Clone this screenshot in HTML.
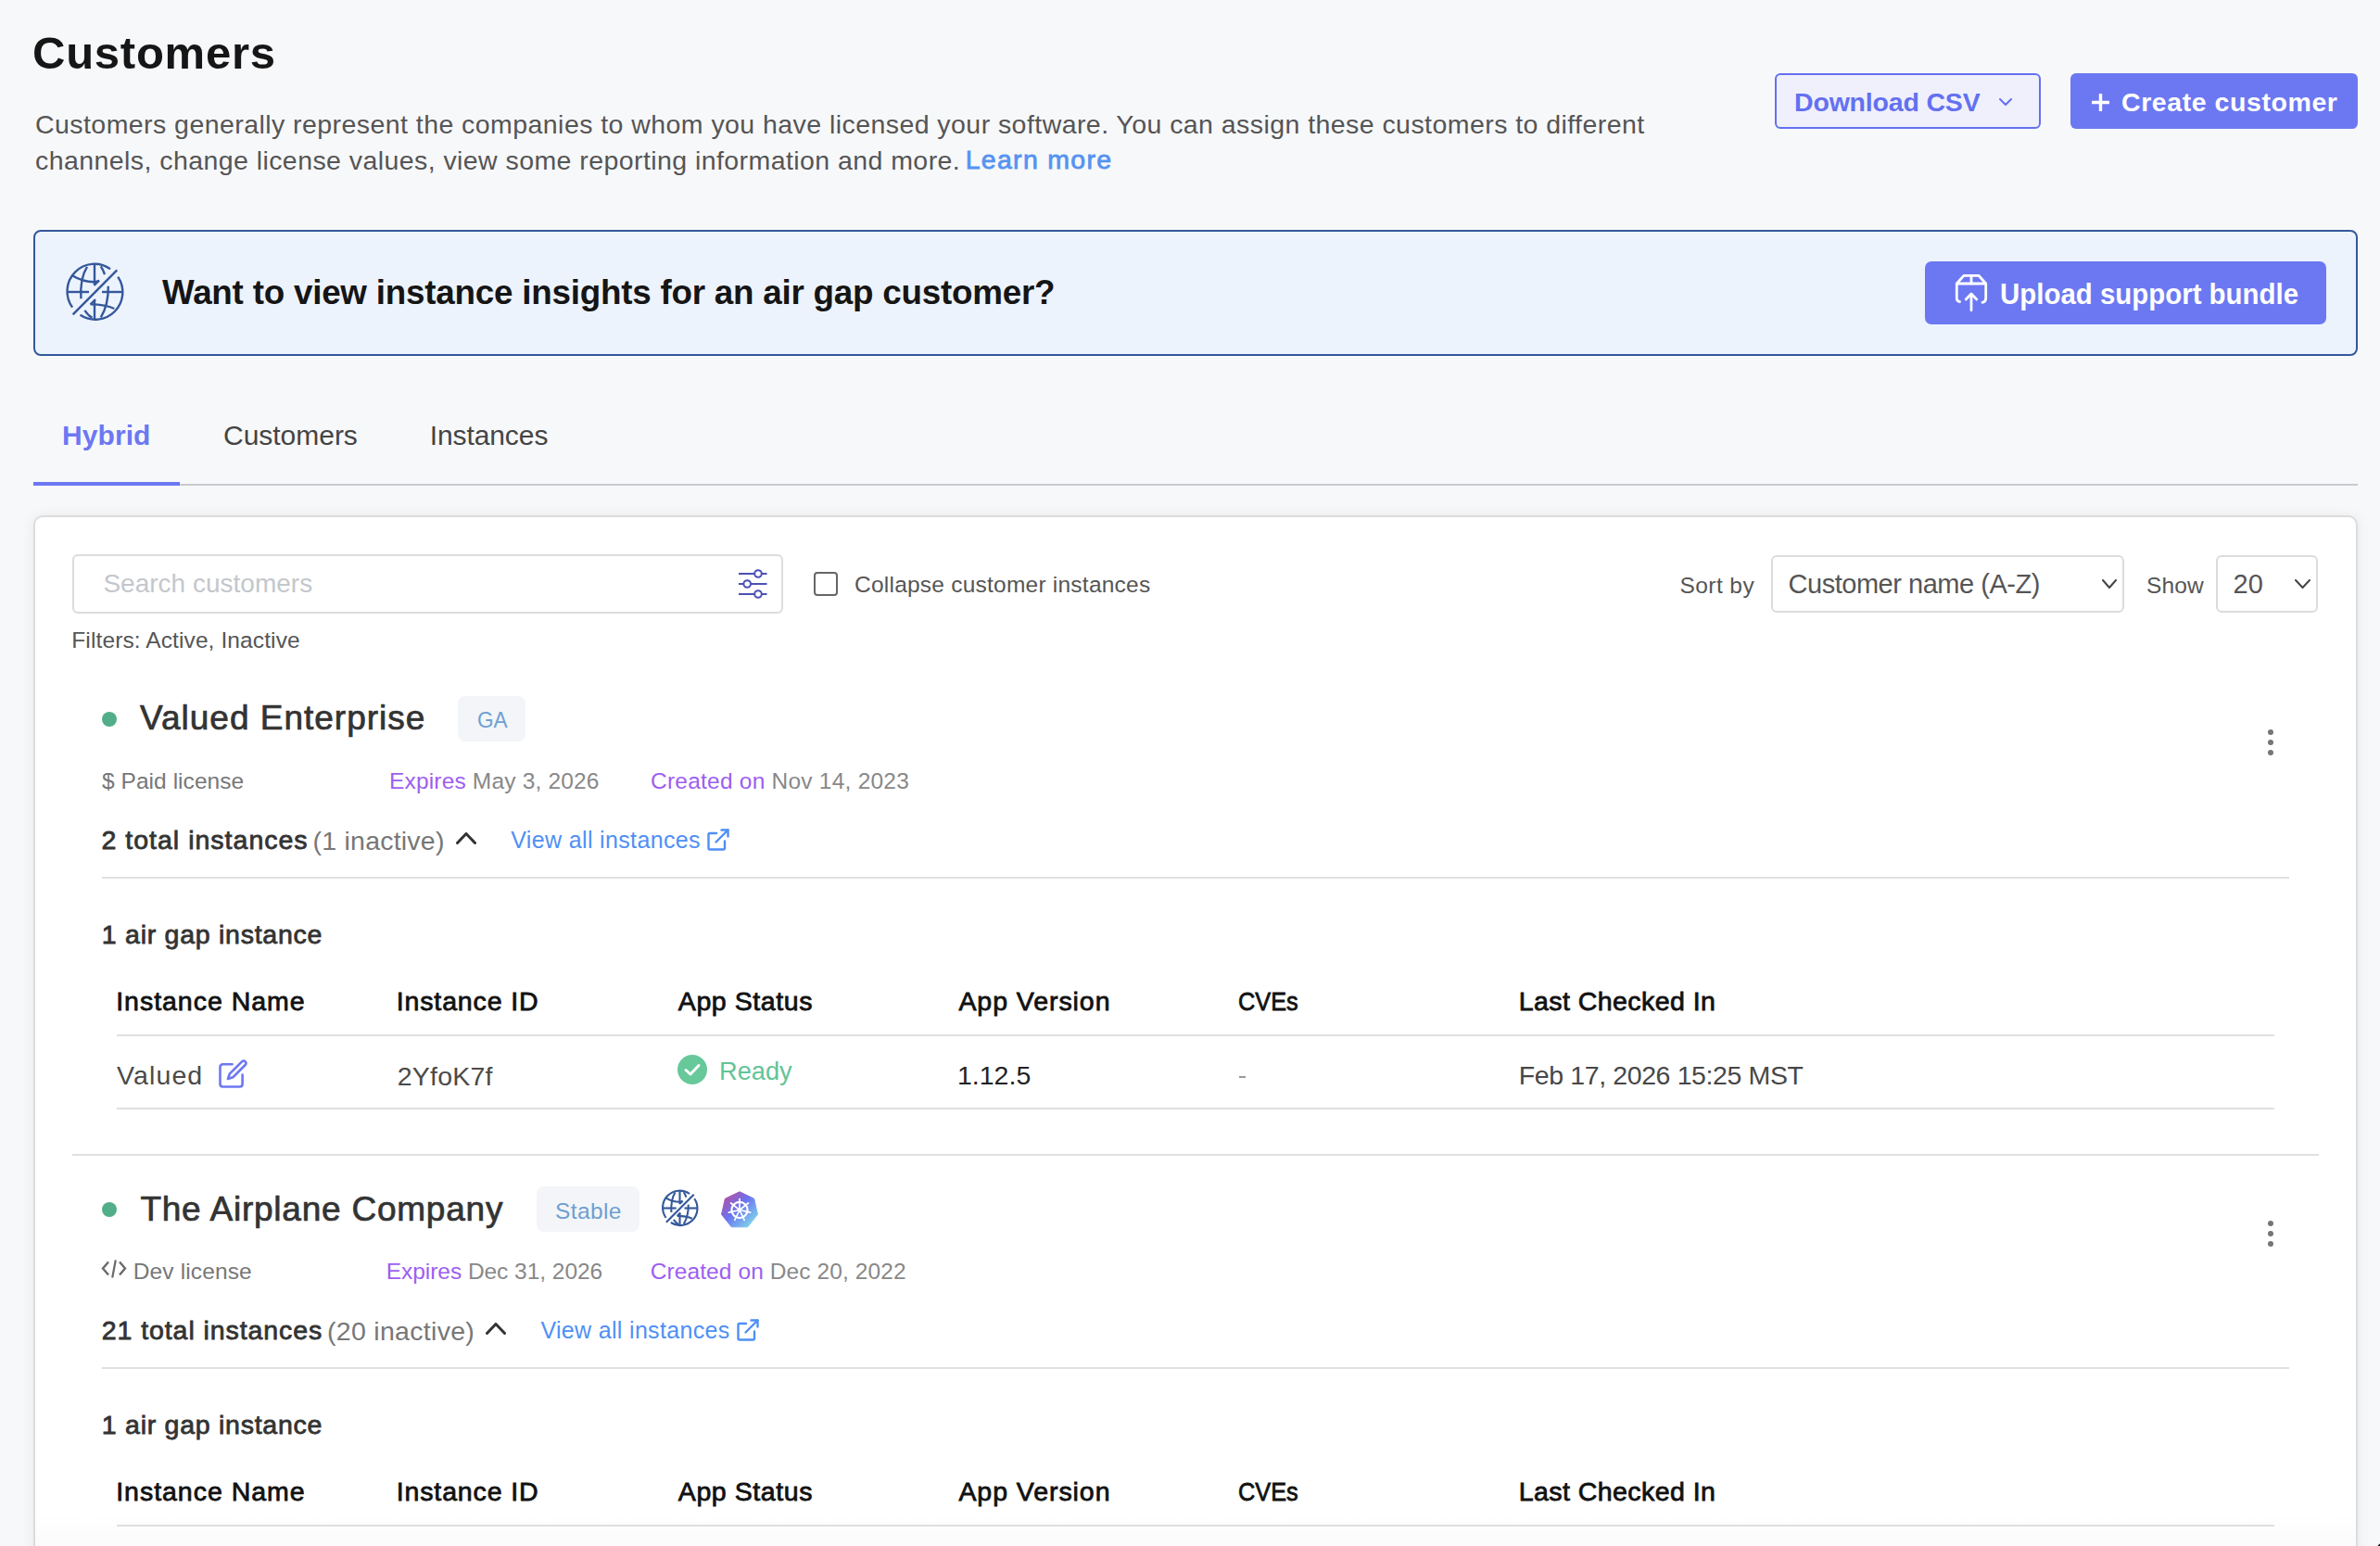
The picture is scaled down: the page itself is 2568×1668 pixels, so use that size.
<!DOCTYPE html><html><head><meta charset="utf-8"><style>html,body{margin:0;padding:0}body{width:2568px;height:1668px;overflow:hidden;position:relative;background:#f7f8fa;font-family:"Liberation Sans",sans-serif}.t{position:absolute;white-space:nowrap;line-height:1}.b{position:absolute;box-sizing:border-box}.p{color:#9d5ef0}@media (max-width:1400px){html{zoom:0.5}}</style></head><body>
<div class="t" style="left:35.0px;top:33.0px;font-size:49px;font-weight:700;letter-spacing:0.75px;color:#161616">Customers</div>
<div class="t" style="left:38.0px;top:120.0px;font-size:28.5px;letter-spacing:0.44px;color:#555">Customers generally represent the companies to whom you have licensed your software. You can assign these customers to different</div>
<div class="t" style="left:38.0px;top:159.0px;font-size:28.5px;letter-spacing:0.43px;color:#555">channels, change license values, view some reporting information and more.</div>
<div class="t" style="left:1041.7px;top:158.0px;font-size:28.5px;-webkit-text-stroke:0.8px currentColor;letter-spacing:1.29px;color:#5593f0">Learn more</div>
<div class="b" style="left:1915px;top:79px;width:287px;height:60px;border:2px solid #6470f0;background:#eff0fc;border-radius:6px"></div>
<div class="t" style="left:1936.0px;top:96.0px;font-size:28.5px;font-weight:700;letter-spacing:-0.18px;color:#6470f0">Download CSV</div>
<svg class="b" style="left:2157px;top:106px;" width="14" height="8" viewBox="0 0 14 8"><path d="M1.0 1.0 L7.0 7.0 L13.0 1.0" fill="none" stroke="#6470f0" stroke-width="2" stroke-linecap="round" stroke-linejoin="round"/></svg>
<div class="b" style="left:2234px;top:79px;width:310px;height:60px;background:#6c78f2;border-radius:6px"></div>
<svg class="b" style="left:2257px;top:101px;" width="19" height="19" viewBox="0 0 19 19"><path d="M9.5 1 V18 M1 9.5 H18" stroke="#fff" stroke-width="3.4" stroke-linecap="round"/></svg>
<div class="t" style="left:2289.0px;top:96.0px;font-size:28.5px;font-weight:700;letter-spacing:0.57px;color:#fff">Create customer</div>
<div class="b" style="left:36px;top:248px;width:2508px;height:136px;border:2px solid #34589b;background:#edf3fd;border-radius:8px"></div>
<svg class="b" style="left:66px;top:279px;" width="72" height="72" viewBox="0 0 72 72"><g fill="none" stroke="#34589b" stroke-width="2.4" stroke-linecap="butt"><path d="M53 11.2 A29.5 29.5 0 0 0 12.1 52.6"/><path d="M61.2 19.6 A29.5 29.5 0 0 1 20.5 60.8"/><path d="M12.6 60.3 L60.3 12.3"/><path d="M36 6.5 V28.5"/><path d="M12.5 18.5 C18 22 26 25 36 25.3 L41 24"/><path d="M35.5 28.8 L41 23.5"/><path d="M28 8.8 C22 18 20.5 28 21.4 43.3"/><path d="M6 36 H30"/><path d="M44 36 H66"/><path d="M50.8 29.8 C51 45 48 55 42.8 63.3"/><path d="M36 44.5 V66"/><path d="M31.7 49.4 C42 49.5 51 51 57.3 54"/><path d="M31.5 49.5 L37 44"/><path d="M42.8 8.4 C44.5 11 46 14 47 17.2"/><path d="M25.4 55.9 C27.5 59 30 62 33.5 63.8"/></g></svg>
<div class="t" style="left:175.0px;top:298.0px;font-size:36.8px;font-weight:700;letter-spacing:-0.23px;color:#151515">Want to view instance insights for an air gap customer?</div>
<div class="b" style="left:2077px;top:282px;width:433px;height:68px;background:#6c78f2;border-radius:7px"></div>
<svg class="b" style="left:2100px;top:290px;" width="54" height="54" viewBox="0 0 54 54"><g fill="none" stroke="#fff" stroke-width="2.8" stroke-linecap="round" stroke-linejoin="round"><path d="M14.5 35.5 Q11.3 35 11.3 32 V16 L18.9 7.3 H35 L42.7 16 V32 Q42.7 35.5 39 36.3"/><path d="M11.3 16 H42.7"/><path d="M27 7.3 V16"/><path d="M27 44.8 V27.5"/><path d="M21.2 33 L27 27 L32.8 33"/></g></svg>
<div class="t" style="left:2158.1px;top:302.0px;font-size:31px;font-weight:700;letter-spacing:0.00px;color:#fff;transform:scaleX(0.9494);transform-origin:0 0">Upload support bundle</div>
<div class="t" style="left:67.0px;top:454.7px;font-size:30px;font-weight:700;letter-spacing:0.08px;color:#6c78f2">Hybrid</div>
<div class="t" style="left:241.0px;top:454.7px;font-size:30px;letter-spacing:-0.02px;color:#444">Customers</div>
<div class="t" style="left:463.7px;top:454.7px;font-size:30px;letter-spacing:-0.09px;color:#444">Instances</div>
<div class="b" style="left:36px;top:522px;width:2508px;height:2px;background:#c9cbcf"></div>
<div class="b" style="left:36px;top:520px;width:158px;height:4px;background:#6c78f2"></div>
<div class="b" style="left:36px;top:556px;width:2508px;height:1300px;border:2px solid #dcdcdc;background:#fff;border-radius:10px;box-shadow:0 1px 14px rgba(0,0,0,0.075)"></div>
<div class="b" style="left:78px;top:598px;width:767px;height:64px;border:2px solid #dcdcdc;border-radius:6px;background:#fff"></div>
<div class="t" style="left:111.4px;top:616.0px;font-size:28px;letter-spacing:0.01px;color:#c3c7cc">Search customers</div>
<svg class="b" style="left:795px;top:613px;" width="34" height="34" viewBox="0 0 34 34"><g fill="none" stroke="#4b50b6" stroke-width="2"><path d="M2 6 H32.5"/><path d="M2 17 H32.5"/><path d="M2 28 H32.5"/></g><g fill="#fff" stroke="#4b50b6" stroke-width="2"><circle cx="23" cy="6" r="3.8"/><circle cx="11.2" cy="17" r="3.8"/><circle cx="23" cy="28" r="3.8"/></g></svg>
<div class="b" style="left:878px;top:617px;width:26px;height:26px;border:2px solid #666;border-radius:4px;background:#fff"></div>
<div class="t" style="left:922.0px;top:619.0px;font-size:24.5px;letter-spacing:0.23px;color:#555">Collapse customer instances</div>
<div class="t" style="left:77.3px;top:679.3px;font-size:24.5px;letter-spacing:0.11px;color:#555">Filters: Active, Inactive</div>
<div class="t" style="left:1812.5px;top:619.8px;font-size:24.5px;letter-spacing:0.42px;color:#555">Sort by</div>
<div class="b" style="left:1911px;top:599px;width:381px;height:62px;border:2px solid #dcdcdc;border-radius:6px;background:#fff"></div>
<div class="t" style="left:1929.5px;top:616.0px;font-size:29px;letter-spacing:-0.47px;color:#555">Customer name (A-Z)</div>
<svg class="b" style="left:2268px;top:625px;" width="16" height="10" viewBox="0 0 16 10"><path d="M1.0 1.0 L8.0 9.0 L15.0 1.0" fill="none" stroke="#444" stroke-width="2" stroke-linecap="round" stroke-linejoin="round"/></svg>
<div class="t" style="left:2316.0px;top:619.8px;font-size:24.5px;letter-spacing:0.17px;color:#555">Show</div>
<div class="b" style="left:2391px;top:599px;width:110px;height:62px;border:2px solid #dcdcdc;border-radius:6px;background:#fff"></div>
<div class="t" style="left:2409.5px;top:616.0px;font-size:29px;letter-spacing:0.00px;color:#555">20</div>
<svg class="b" style="left:2476px;top:625px;" width="17" height="10" viewBox="0 0 17 10"><path d="M1.0 1.0 L8.5 9.0 L16.0 1.0" fill="none" stroke="#444" stroke-width="2" stroke-linecap="round" stroke-linejoin="round"/></svg>
<div class="b" style="left:110px;top:768px;width:16px;height:16px;border-radius:50%;background:#52ae88"></div>
<div class="b" style="left:2447px;top:787px;width:6px;height:6px;border-radius:50%;background:#757575"></div>
<div class="b" style="left:2447px;top:798px;width:6px;height:6px;border-radius:50%;background:#757575"></div>
<div class="b" style="left:2447px;top:809px;width:6px;height:6px;border-radius:50%;background:#757575"></div>
<div class="b" style="left:110px;top:1297px;width:16px;height:16px;border-radius:50%;background:#52ae88"></div>
<div class="b" style="left:2447px;top:1317px;width:6px;height:6px;border-radius:50%;background:#757575"></div>
<div class="b" style="left:2447px;top:1328px;width:6px;height:6px;border-radius:50%;background:#757575"></div>
<div class="b" style="left:2447px;top:1339px;width:6px;height:6px;border-radius:50%;background:#757575"></div>
<div class="t" style="left:151.0px;top:755.8px;font-size:37px;-webkit-text-stroke:0.74px currentColor;letter-spacing:1.00px;color:#333">Valued Enterprise</div>
<div class="b" style="left:494px;top:751px;width:73px;height:49px;background:#f3f5f8;border-radius:8px"></div>
<div class="t" style="left:514.7px;top:765.0px;font-size:24.5px;letter-spacing:0.00px;color:#6f9fd2;transform:scaleX(0.9235);transform-origin:0 0">GA</div>
<div class="t" style="left:110.0px;top:831.0px;font-size:24.5px;letter-spacing:0.05px;color:#777">$ Paid license</div>
<div class="t" style="left:420.0px;top:831.0px;font-size:24.5px;letter-spacing:0.17px;color:#888"><span class=p>Expires</span> May 3, 2026</div>
<div class="t" style="left:702.0px;top:831.0px;font-size:24.5px;letter-spacing:0.23px;color:#888"><span class=p>Created on</span> Nov 14, 2023</div>
<div class="t" style="left:109.5px;top:892.0px;font-size:28.5px;-webkit-text-stroke:0.8px currentColor;letter-spacing:1.01px;color:#333">2 total instances</div>
<div class="t" style="left:337.6px;top:893.0px;font-size:28.5px;letter-spacing:0.22px;color:#777">(1 inactive)</div>
<svg class="b" style="left:492px;top:898px;" width="22" height="13" viewBox="0 0 22 13"><path d="M1.5 11.5 L11.0 1.5 L20.5 11.5" fill="none" stroke="#333" stroke-width="3" stroke-linecap="round" stroke-linejoin="round"/></svg>
<div class="t" style="left:551.3px;top:894.0px;font-size:25px;letter-spacing:0.35px;color:#4f8ff5">View all instances</div>
<svg class="b" style="left:763px;top:894px;" width="24" height="24" viewBox="0 0 24 24"><g fill="none" stroke="#4f8ff5" stroke-width="2.4" stroke-linecap="round" stroke-linejoin="round"><path d="M10 5 H3 Q1.5 5 1.5 6.5 V21 Q1.5 22.5 3 22.5 H17.5 Q19 22.5 19 21 V13.5"/><path d="M9.5 14.5 L22.5 1.5"/><path d="M15.5 1.5 H22.5 V8.5"/></g></svg>
<div class="b" style="left:110px;top:946px;width:2360px;height:2px;background:#e0e0e0"></div>
<div class="t" style="left:109.8px;top:993.7px;font-size:28.5px;-webkit-text-stroke:0.8px currentColor;letter-spacing:0.74px;color:#333">1 air gap instance</div>
<div class="t" style="left:125.2px;top:1066.0px;font-size:28.5px;-webkit-text-stroke:0.8px currentColor;letter-spacing:0.98px;color:#111">Instance Name</div>
<div class="t" style="left:427.7px;top:1066.0px;font-size:28.5px;-webkit-text-stroke:0.8px currentColor;letter-spacing:0.88px;color:#111">Instance ID</div>
<div class="t" style="left:731.8px;top:1066.0px;font-size:28.5px;-webkit-text-stroke:0.8px currentColor;letter-spacing:0.58px;color:#111">App Status</div>
<div class="t" style="left:1034.4px;top:1066.0px;font-size:28.5px;-webkit-text-stroke:0.8px currentColor;letter-spacing:0.94px;color:#111">App Version</div>
<div class="t" style="left:1336.1px;top:1066.0px;font-size:28.5px;-webkit-text-stroke:0.8px currentColor;letter-spacing:0.00px;color:#111;transform:scaleX(0.8873);transform-origin:0 0">CVEs</div>
<div class="t" style="left:1638.7px;top:1066.0px;font-size:28.5px;-webkit-text-stroke:0.8px currentColor;letter-spacing:0.45px;color:#111">Last Checked In</div>
<div class="b" style="left:126px;top:1116px;width:2328px;height:2px;background:#e0e0e0"></div>
<div class="t" style="left:126.1px;top:1145.8px;font-size:28.5px;letter-spacing:1.10px;color:#4a4a4a">Valued</div>
<svg class="b" style="left:234px;top:1142px;" width="34" height="34" viewBox="0 0 34 34"><g fill="none" stroke="#6c78f2" stroke-width="2.6" stroke-linecap="round" stroke-linejoin="round"><path d="M16.6 6.3 H6.5 Q3.5 6.3 3.5 9.3 V27.5 Q3.5 30.5 6.5 30.5 H24.6 Q27.6 30.5 27.6 27.5 V17.5"/><path d="M27 3.4 L13.7 16.7 L12 22 L17.3 20.3 L30.6 7 Q32.5 5 30.6 3.4 Q29 1.5 27 3.4 Z"/></g></svg>
<div class="t" style="left:428.7px;top:1146.5px;font-size:28.5px;letter-spacing:0.22px;color:#4a4a4a">2YfoK7f</div>
<svg class="b" style="left:731px;top:1138px;" width="32" height="32" viewBox="0 0 32 32"><circle cx="16" cy="16" r="16" fill="#67c89a"/><path d="M9 16.5 L14 21 L23 11.5" fill="none" stroke="#fff" stroke-width="3" stroke-linecap="round" stroke-linejoin="round"/></svg>
<div class="t" style="left:776.1px;top:1140.9px;font-size:28.5px;letter-spacing:0.00px;color:#62c496;transform:scaleX(0.9550);transform-origin:0 0">Ready</div>
<div class="t" style="left:1033.0px;top:1146.0px;font-size:28.5px;letter-spacing:0.00px;color:#222">1.12.5</div>
<div class="b" style="left:1337px;top:1161px;width:7px;height:2px;background:#999"></div>
<div class="t" style="left:1638.7px;top:1146.0px;font-size:28.5px;letter-spacing:-0.38px;color:#474747">Feb 17, 2026 15:25 MST</div>
<div class="b" style="left:126px;top:1195px;width:2328px;height:2px;background:#e0e0e0"></div>
<div class="b" style="left:78px;top:1245px;width:2424px;height:2px;background:#e0e0e0"></div>
<div class="t" style="left:151.4px;top:1286.0px;font-size:37px;-webkit-text-stroke:0.74px currentColor;letter-spacing:0.77px;color:#333">The Airplane Company</div>
<div class="b" style="left:579px;top:1280px;width:111px;height:49px;background:#f3f5f8;border-radius:8px"></div>
<div class="t" style="left:599.0px;top:1295.0px;font-size:24.5px;letter-spacing:0.40px;color:#6f9fd2">Stable</div>
<svg class="b" style="left:711px;top:1281px;" width="45" height="45" viewBox="0 0 72 72"><g fill="none" stroke="#34589b" stroke-width="3.4" stroke-linecap="butt"><path d="M53 11.2 A29.5 29.5 0 0 0 12.1 52.6"/><path d="M61.2 19.6 A29.5 29.5 0 0 1 20.5 60.8"/><path d="M12.6 60.3 L60.3 12.3"/><path d="M36 6.5 V28.5"/><path d="M12.5 18.5 C18 22 26 25 36 25.3 L41 24"/><path d="M35.5 28.8 L41 23.5"/><path d="M28 8.8 C22 18 20.5 28 21.4 43.3"/><path d="M6 36 H30"/><path d="M44 36 H66"/><path d="M50.8 29.8 C51 45 48 55 42.8 63.3"/><path d="M36 44.5 V66"/><path d="M31.7 49.4 C42 49.5 51 51 57.3 54"/><path d="M31.5 49.5 L37 44"/><path d="M42.8 8.4 C44.5 11 46 14 47 17.2"/><path d="M25.4 55.9 C27.5 59 30 62 33.5 63.8"/></g></svg>
<svg class="b" style="left:778px;top:1285px;" width="40" height="40" viewBox="0 0 40 40"><defs><linearGradient id="kg" x1="0" y1="0" x2="1" y2="1"><stop offset="0" stop-color="#c9468a"/><stop offset="0.45" stop-color="#6b73f0"/><stop offset="1" stop-color="#84ecea"/></linearGradient></defs><path d="M20 0.8 L35.6 8.3 L39.5 25.2 L28.7 38.8 L11.3 38.8 L0.5 25.2 L4.4 8.3 Z" fill="url(#kg)" stroke="url(#kg)" stroke-width="1" stroke-linejoin="round"/><g stroke="#fff" fill="none" stroke-linecap="round"><circle cx="20" cy="20.5" r="8.6" stroke-width="2.2"/><circle cx="20" cy="20.5" r="1.3" fill="#fff" stroke="none"/><g stroke-width="1.7"><path d="M20 20.5 L20 8.5" transform="rotate(0.0 20 20.5)"/><path d="M20 20.5 L20 8.5" transform="rotate(51.4 20 20.5)"/><path d="M20 20.5 L20 8.5" transform="rotate(102.9 20 20.5)"/><path d="M20 20.5 L20 8.5" transform="rotate(154.3 20 20.5)"/><path d="M20 20.5 L20 8.5" transform="rotate(205.7 20 20.5)"/><path d="M20 20.5 L20 8.5" transform="rotate(257.1 20 20.5)"/><path d="M20 20.5 L20 8.5" transform="rotate(308.6 20 20.5)"/></g></g></svg>
<svg class="b" style="left:108px;top:1358px;" width="30" height="22" viewBox="0 0 30 22"><g fill="none" stroke="#6a6a6a" stroke-width="2.4" stroke-linecap="butt" stroke-linejoin="miter"><path d="M9 3.5 L3 10.5 L9 17.5"/><path d="M21 3.5 L27 10.5 L21 17.5"/><path d="M16.8 1.5 L13.2 20.5" stroke-width="2.2"/></g></svg>
<div class="t" style="left:143.8px;top:1360.0px;font-size:24.5px;letter-spacing:0.12px;color:#777">Dev license</div>
<div class="t" style="left:416.7px;top:1360.0px;font-size:24.5px;letter-spacing:-0.04px;color:#888"><span class=p>Expires</span> Dec 31, 2026</div>
<div class="t" style="left:701.7px;top:1360.0px;font-size:24.5px;letter-spacing:0.10px;color:#888"><span class=p>Created on</span> Dec 20, 2022</div>
<div class="t" style="left:109.8px;top:1421.3px;font-size:28.5px;-webkit-text-stroke:0.8px currentColor;letter-spacing:0.92px;color:#333">21 total instances</div>
<div class="t" style="left:353.0px;top:1422.3px;font-size:28.5px;letter-spacing:0.30px;color:#777">(20 inactive)</div>
<svg class="b" style="left:524px;top:1427px;" width="22" height="13" viewBox="0 0 22 13"><path d="M1.5 11.5 L11.0 1.5 L20.5 11.5" fill="none" stroke="#333" stroke-width="3" stroke-linecap="round" stroke-linejoin="round"/></svg>
<div class="t" style="left:583.4px;top:1423.0px;font-size:25px;letter-spacing:0.33px;color:#4f8ff5">View all instances</div>
<svg class="b" style="left:795px;top:1423px;" width="24" height="24" viewBox="0 0 24 24"><g fill="none" stroke="#4f8ff5" stroke-width="2.4" stroke-linecap="round" stroke-linejoin="round"><path d="M10 5 H3 Q1.5 5 1.5 6.5 V21 Q1.5 22.5 3 22.5 H17.5 Q19 22.5 19 21 V13.5"/><path d="M9.5 14.5 L22.5 1.5"/><path d="M15.5 1.5 H22.5 V8.5"/></g></svg>
<div class="b" style="left:110px;top:1475px;width:2360px;height:2px;background:#e0e0e0"></div>
<div class="t" style="left:109.8px;top:1522.7px;font-size:28.5px;-webkit-text-stroke:0.8px currentColor;letter-spacing:0.74px;color:#333">1 air gap instance</div>
<div class="t" style="left:125.2px;top:1595.0px;font-size:28.5px;-webkit-text-stroke:0.8px currentColor;letter-spacing:0.98px;color:#111">Instance Name</div>
<div class="t" style="left:427.7px;top:1595.0px;font-size:28.5px;-webkit-text-stroke:0.8px currentColor;letter-spacing:0.88px;color:#111">Instance ID</div>
<div class="t" style="left:731.8px;top:1595.0px;font-size:28.5px;-webkit-text-stroke:0.8px currentColor;letter-spacing:0.58px;color:#111">App Status</div>
<div class="t" style="left:1034.4px;top:1595.0px;font-size:28.5px;-webkit-text-stroke:0.8px currentColor;letter-spacing:0.94px;color:#111">App Version</div>
<div class="t" style="left:1336.1px;top:1595.0px;font-size:28.5px;-webkit-text-stroke:0.8px currentColor;letter-spacing:0.00px;color:#111;transform:scaleX(0.8873);transform-origin:0 0">CVEs</div>
<div class="t" style="left:1638.7px;top:1595.0px;font-size:28.5px;-webkit-text-stroke:0.8px currentColor;letter-spacing:0.45px;color:#111">Last Checked In</div>
<div class="b" style="left:126px;top:1645px;width:2328px;height:2px;background:#e0e0e0"></div>
<div class="b" style="left:38px;top:1634px;width:2504px;height:34px;background:linear-gradient(rgba(0,0,0,0),rgba(0,0,0,0.018))"></div>
<div class="b" style="left:2556px;top:1656px;width:68px;height:68px;border-radius:50%;background:#111;border:1.5px solid #fff"></div>
</body></html>
